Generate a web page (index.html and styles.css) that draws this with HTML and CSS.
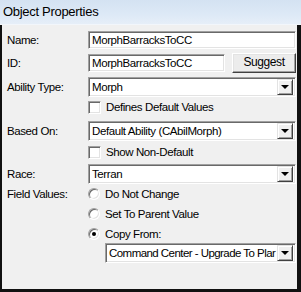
FILE: index.html
```html
<!DOCTYPE html>
<html lang="en">
<head>
    <meta charset="UTF-8">
    <title>Object Properties</title>
    <link rel="stylesheet" href="styles.css">
</head>
<body>
    <div class="titlebar">Object Properties</div>

    <div class="panel">
        <div class="row row-name">
            <div class="label">Name:</div>
            <div class="field">MorphBarracksToCC</div>
        </div>

        <div class="row row-id">
            <div class="label">ID:</div>
            <div class="field field-id">MorphBarracksToCC</div>
            <div class="button">Suggest</div>
        </div>

        <div class="row row-combo">
            <div class="label">Ability Type:</div>
            <div class="combo">
                <span class="combo-text">Morph</span>
                <span class="combo-arrow"></span>
            </div>
        </div>

        <div class="row row-check">
            <div class="label"></div>
            <span class="checkbox"></span>
            <span>Defines Default Values</span>
        </div>

        <div class="row row-combo">
            <div class="label">Based On:</div>
            <div class="combo">
                <span class="combo-text">Default Ability (CAbilMorph)</span>
                <span class="combo-arrow"></span>
            </div>
        </div>

        <div class="row row-check row-check2">
            <div class="label"></div>
            <span class="checkbox"></span>
            <span>Show Non-Default</span>
        </div>

        <div class="row row-combo row-race">
            <div class="label">Race:</div>
            <div class="combo">
                <span class="combo-text">Terran</span>
                <span class="combo-arrow"></span>
            </div>
        </div>

        <div class="fields">
            <div class="label label-top">Field Values:</div>
            <div class="options">
                <div class="option"><span class="radio"></span>Do Not Change</div>
                <div class="option"><span class="radio"></span>Set To Parent Value</div>
                <div class="option"><span class="radio checked"></span>Copy From:</div>
                <div class="combo combo-copy">
                    <span class="combo-text combo-text-tight">Command Center - Upgrade To Plar</span>
                    <span class="combo-arrow"></span>
                </div>
            </div>
        </div>
    </div>
</body>
</html>
```

FILE: styles.css
```css
* {
    box-sizing: border-box;
}

body {
    margin: 0;
    width: 301px;
    height: 292px;
    overflow: hidden;
    background: #f0f0f0;
    color: #000;
    font-family: "Liberation Sans", Arial, sans-serif;
    font-size: 11.5px;
    letter-spacing: -0.4px;
    display: flex;
    flex-direction: column;
}

.titlebar {
    height: 25px;
    padding: 4px 0 0 3px;
    font-size: 13px;
    letter-spacing: -0.3px;
    background: linear-gradient(#d4e2f2, #dde9f6 60%, #e6eef8);
    border-bottom: 1px solid #f2f6fb;
}

.panel {
    flex: 1;
    padding: 6px 1px 0 5px;
    border-left: 2px solid #111;
    border-right: 4px solid #111;
    border-bottom: 3px solid #111;
}

.row {
    display: flex;
    align-items: center;
}

.label {
    width: 81px;
    flex-shrink: 0;
}

.field {
    flex: 1;
    min-width: 0;
    height: 18px;
    padding: 1px 0 0 3px;
    line-height: 14px;
    background: #fff;
    border: 1px solid;
    border-color: #a0a0a0 #fff #fff #a0a0a0;
    box-shadow: inset 1px 1px 0 #696969, inset -1px -1px 0 #e3e3e3;
    white-space: nowrap;
    overflow: hidden;
}

.row-name {
    height: 18px;
}

.row-id {
    height: 20px;
    margin-top: 4px;
}

.field-id {
    flex: 0 0 137px;
}

.button {
    margin-left: 7px;
    flex: 1;
    height: 20px;
    line-height: 17px;
    text-align: center;
    background: #ececec;
    border: 1px solid;
    border-color: #fff #404040 #404040 #fff;
    box-shadow: inset -1px -1px 0 #a0a0a0, inset 1px 1px 0 #e3e3e3;
    font-size: 12px;
}

.row-combo {
    height: 20px;
    margin-top: 4px;
}

.combo {
    flex: 1;
    min-width: 0;
    height: 20px;
    display: flex;
    align-items: center;
    padding: 2px;
    background: #fff;
    border: 1px solid;
    border-color: #a0a0a0 #fff #fff #a0a0a0;
    box-shadow: inset 1px 1px 0 #696969, inset -1px -1px 0 #e3e3e3;
    overflow: hidden;
}

.combo-text {
    flex: 1;
    min-width: 0;
    padding-left: 1px;
    white-space: nowrap;
    overflow: hidden;
}

.combo-text-tight {
    letter-spacing: -0.55px;
}

.combo-arrow {
    flex: 0 0 16px;
    height: 16px;
    position: relative;
    background: #f0f0f0;
    border: 1px solid;
    border-color: #e3e3e3 #404040 #404040 #e3e3e3;
    box-shadow: inset 1px 1px 0 #fff, inset -1px -1px 0 #a0a0a0;
}

.combo-arrow::after {
    content: "";
    position: absolute;
    left: 3px;
    top: 5px;
    border-left: 4px solid transparent;
    border-right: 4px solid transparent;
    border-top: 4px solid #000;
}

.row-check {
    height: 20px;
}

.row-check2 {
    height: 22px;
}

.row-race {
    margin-top: 1px;
}

.checkbox {
    width: 13px;
    height: 13px;
    margin-right: 5px;
    background: #fff;
    border: 1px solid;
    border-color: #a0a0a0 #fff #fff #a0a0a0;
    box-shadow: inset 1px 1px 0 #696969, inset -1px -1px 0 #e3e3e3;
}

.fields {
    display: flex;
}

.label-top {
    padding-top: 4px;
}

.options {
    flex: 1;
    min-width: 0;
    display: flex;
    flex-direction: column;
}

.option {
    height: 20px;
    display: flex;
    align-items: center;
}

.radio {
    width: 12px;
    height: 12px;
    margin-right: 5px;
    position: relative;
    border-radius: 50%;
    background: #fff;
    border: 1px solid;
    border-color: #a0a0a0 #fff #fff #a0a0a0;
    box-shadow: inset 1px 1px 0 #696969, inset -1px -1px 0 #e3e3e3;
}

.radio.checked::after {
    content: "";
    position: absolute;
    left: 3px;
    top: 3px;
    width: 4px;
    height: 4px;
    border-radius: 50%;
    background: #000;
}

.combo-copy {
    flex: 0 0 20px;
    margin-left: 17px;
    margin-top: -1px;
}
```
